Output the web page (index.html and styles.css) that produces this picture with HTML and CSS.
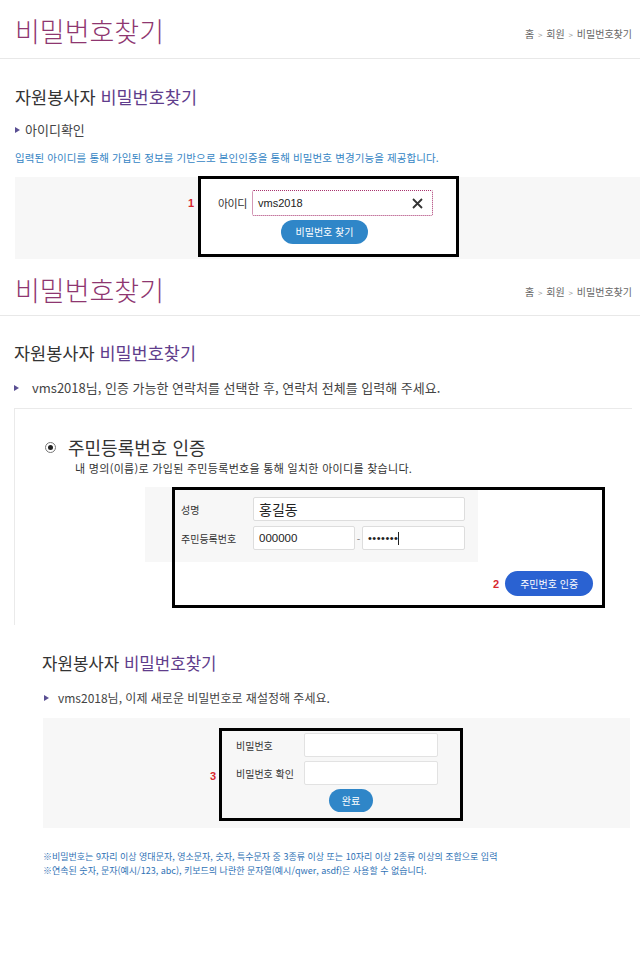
FILE: index.html
```html
<!DOCTYPE html>
<html lang="ko">
<head>
    <meta charset="utf-8">
    <title>비밀번호찾기</title>
    <link rel="stylesheet" href="styles.css">
</head>
<body>

    <!-- 1. 아이디 확인 -->
    <div class="shot shot1">
        <div class="top">
            <h1 class="title">비밀번호찾기</h1>
            <div class="crumb">홈 <span class="gt">&gt;</span> 회원 <span class="gt">&gt;</span> 비밀번호찾기</div>
        </div>
        <h2 class="sub">자원봉사자 <span class="pt">비밀번호찾기</span></h2>
        <p class="step">아이디확인</p>
        <p class="info">입력된 아이디를 통해 가입된 정보를 기반으로 본인인증을 통해 비밀번호 변경기능을 제공합니다.</p>
        <div class="graybar">
            <div class="mark mark1">
                <span class="num">1</span>
                <div class="idrow">
                    <span class="lbl">아이디</span>
                    <div class="field focus">
                        <span>vms2018</span>
                        <svg class="clear" width="11" height="11" viewBox="0 0 11 11"><path d="M1 1 L10 10 M10 1 L1 10" stroke="#333" stroke-width="1.8"/></svg>
                    </div>
                </div>
                <div class="btn btn1">비밀번호 찾기</div>
            </div>
        </div>
    </div>

    <!-- 2. 본인 인증 -->
    <div class="shot shot2">
        <div class="top">
            <h1 class="title">비밀번호찾기</h1>
            <div class="crumb">홈 <span class="gt">&gt;</span> 회원 <span class="gt">&gt;</span> 비밀번호찾기</div>
        </div>
        <h2 class="sub">자원봉사자 <span class="pt">비밀번호찾기</span></h2>
        <p class="step">vms2018님, 인증 가능한 연락처를 선택한 후, 연락처 전체를 입력해 주세요.</p>
        <div class="authbox">
            <div class="radiorow"><span class="radio"></span>주민등록번호 인증</div>
            <p class="desc">내 명의(이름)로 가입된 주민등록번호을 통해 일치한 아이디를 찾습니다.</p>
            <div class="authform">
                <div class="mark mark2"></div>
                <div class="grayform">
                    <div class="frow">
                        <span class="flbl">성명</span>
                        <div class="field f-name">홍길동</div>
                    </div>
                    <div class="frow">
                        <span class="flbl">주민등록번호</span>
                        <div class="field f-jumin">000000</div>
                        <span class="dash">-</span>
                        <div class="field f-jumin pw">&bull;&bull;&bull;&bull;&bull;&bull;&bull;<span class="caret"></span></div>
                    </div>
                </div>
                <div class="btnrow">
                    <span class="num num2">2</span>
                    <div class="btn btn2">주민번호 인증</div>
                </div>
            </div>
        </div>
    </div>

    <!-- 3. 비밀번호 재설정 -->
    <div class="shot shot3">
        <h2 class="sub">자원봉사자 <span class="pt">비밀번호찾기</span></h2>
        <p class="step">vms2018님, 이제 새로운 비밀번호로 재설정해 주세요.</p>
        <div class="graybox">
            <div class="mark mark3">
                <span class="num num3">3</span>
                <div class="frow">
                    <span class="plbl">비밀번호</span>
                    <div class="field f-pw"></div>
                </div>
                <div class="frow">
                    <span class="plbl">비밀번호 확인</span>
                    <div class="field f-pw"></div>
                </div>
                <div class="btn btn3">완료</div>
            </div>
        </div>
        <p class="note">※비밀번호는 9자리 이상 영대문자, 영소문자, 숫자, 특수문자 중 3종류 이상 또는 10자리 이상 2종류 이상의 조합으로 입력</p>
        <p class="note">※연속된 숫자, 문자(예시/123, abc), 키보드의 나란한 문자열(예시/qwer, asdf)은 사용할 수 없습니다.</p>
    </div>

</body>
</html>
```

FILE: styles.css
```css
body {
    margin: 0;
    width: 640px;
    font-family: "Noto Sans CJK KR", "Liberation Sans", sans-serif;
    color: #333;
    background: #fff;
}
p, h1, h2 {
    margin: 0;
    font-weight: normal;
}

/* header */
.top {
    display: flex;
    justify-content: space-between;
    align-items: center;
    padding: 4px 8px 0 15px;
    border-bottom: 1px solid #e8e8e8;
}
.shot1 .top {
    height: 54px;
}
.shot2 .top {
    height: 51px;
}
.title {
    font-size: 27px;
    line-height: 30px;
    font-weight: 300;
    color: #8e3670;
}
.crumb {
    font-size: 10px;
    color: #666;
    margin-top: 4px;
}
.crumb .gt {
    color: #999;
    font-size: 8px;
    margin: 0 1px;
}

.sub {
    font-size: 17.5px;
    line-height: 24px;
    color: #333;
    padding-left: 15px;
}
.sub .pt {
    color: #5f3d8c;
}

.step {
    position: relative;
    font-size: 12px;
    line-height: 18px;
    color: #444;
}
.step::before {
    content: "";
    position: absolute;
    top: 6px;
    border-left: 5px solid #5a4f93;
    border-top: 3px solid transparent;
    border-bottom: 3px solid transparent;
}

/* shot 1 */
.shot1 {
    height: 260px;
}
.shot1 .sub {
    margin-top: 26px;
}
.shot1 .step {
    margin-top: 12px;
    padding-left: 25px;
    font-size: 13px;
}
.shot1 .step::before {
    left: 15px;
}
.info {
    margin-top: 12px;
    padding-left: 15px;
    font-size: 10.5px;
    line-height: 14px;
    letter-spacing: 0.1px;
    color: #3585c4;
}
.graybar {
    margin: 12px 0 0 15px;
    height: 82px;
    background: #f7f7f7;
}

.mark {
    position: relative;
    box-sizing: border-box;
    border: 3px solid #000;
}
.num {
    position: absolute;
    font-family: "Liberation Sans", sans-serif;
    font-weight: bold;
    font-size: 11px;
    line-height: 14px;
    color: #d8282f;
}
.mark1 {
    top: -1px;
    margin-left: 183px;
    width: 261px;
    height: 81px;
    background: #fff;
    padding: 11px 0 0 17px;
}
.mark1 .num {
    left: -13px;
    top: 17px;
}
.idrow {
    display: flex;
    align-items: center;
}
.lbl {
    width: 34px;
    font-size: 11px;
    color: #333;
    letter-spacing: -0.5px;
}
.field {
    box-sizing: border-box;
    background: #fff;
    border: 1px solid #ddd;
    border-radius: 2px;
    font-family: "Liberation Sans", "Noto Sans CJK KR", sans-serif;
    font-size: 11px;
    color: #222;
    display: flex;
    align-items: center;
    padding-left: 5px;
}
.field.focus {
    width: 181px;
    height: 26px;
    border: 1px dotted #a8326e;
    justify-content: space-between;
    padding-right: 9px;
}
.btn {
    box-sizing: border-box;
    color: #fff;
    text-align: center;
    font-size: 10px;
}
.btn1 {
    margin: 4px 0 0 63px;
    width: 87px;
    height: 24px;
    line-height: 24px;
    border-radius: 12px;
    background: #2f86c8;
}

/* shot 2 */
.shot2 {
    height: 370px;
}
.shot2 .sub {
    margin-top: 25px;
    padding-left: 14px;
}
.shot2 .step {
    margin-top: 14px;
    padding-left: 32px;
    font-size: 13px;
}
.shot2 .step::before {
    left: 14px;
}
.authbox {
    margin: 11px 8px 0 14px;
    border-top: 1px solid #eaeaea;
    border-left: 1px solid #eaeaea;
    padding: 27px 0 29px 0;
}
.radiorow {
    display: flex;
    align-items: center;
    font-size: 18px;
    line-height: 22px;
    color: #333;
    padding-left: 30px;
}
.radio {
    box-sizing: border-box;
    width: 11px;
    height: 11px;
    border: 1px solid #777;
    border-radius: 50%;
    margin-right: 12px;
    display: flex;
    align-items: center;
    justify-content: center;
}
.radio::after {
    content: "";
    width: 5px;
    height: 5px;
    border-radius: 50%;
    background: #222;
}
.desc {
    margin-top: 3px;
    font-size: 11px;
    line-height: 14px;
    letter-spacing: 0.3px;
    padding-left: 60px;
    color: #333;
}
.authform {
    position: relative;
    margin: 12px 0 0 130px;
}
.mark2 {
    position: absolute;
    left: 27px;
    top: 0;
    width: 433px;
    height: 121px;
}
.grayform {
    width: 333px;
    height: 75px;
    box-sizing: border-box;
    background: #f7f7f7;
    padding: 10px 0 0 36px;
}
.frow {
    display: flex;
    align-items: center;
}
.grayform .frow + .frow {
    margin-top: 5px;
}
.flbl {
    width: 72px;
    font-size: 10px;
    color: #333;
}
.f-name {
    width: 212px;
    height: 24px;
    font-family: "Noto Sans CJK KR", sans-serif;
    font-size: 14px;
    padding-left: 5px;
}
.f-jumin {
    width: 102px;
    height: 24px;
    font-size: 11.5px;
}
.dash {
    width: 7px;
    text-align: center;
    font-size: 10px;
    color: #777;
}
.pw {
    width: 103px;
    letter-spacing: 0.5px;
    font-size: 11px;
}
.caret {
    display: inline-block;
    width: 1px;
    height: 13px;
    background: #222;
}
.btnrow {
    display: flex;
    align-items: center;
    margin-top: 9px;
    padding-left: 348px;
}
.num2 {
    position: static;
    margin-right: 6px;
}
.btn2 {
    width: 88px;
    height: 25px;
    line-height: 25px;
    border-radius: 13px;
    background: #2a62d2;
}

/* shot 3 */
.shot3 .sub {
    margin-top: 21px;
    padding-left: 42px;
    font-size: 16.8px;
}
.shot3 .step {
    margin-top: 14px;
    padding-left: 58px;
}
.shot3 .step::before {
    left: 44px;
}
.graybox {
    margin: 11px 10px 0 43px;
    height: 110px;
    box-sizing: border-box;
    background: #f7f7f7;
    padding-top: 10px;
}
.mark3 {
    margin-left: 176px;
    width: 244px;
    height: 93px;
    padding: 2px 0 0 14px;
}
.num3 {
    left: -12px;
    top: 38px;
}
.mark3 .frow + .frow {
    margin-top: 4px;
}
.plbl {
    width: 68px;
    font-size: 10px;
    color: #333;
}
.f-pw {
    width: 134px;
    height: 24px;
    border-color: #e2e2e2;
}
.btn3 {
    margin: 4px 0 0 93px;
    width: 44px;
    height: 23px;
    line-height: 23px;
    border-radius: 12px;
    background: #2f86c8;
}
.note {
    padding-left: 43px;
    font-size: 9px;
    line-height: 14px;
    color: #2f72b5;
}
.graybox + .note {
    margin-top: 22px;
}
```
